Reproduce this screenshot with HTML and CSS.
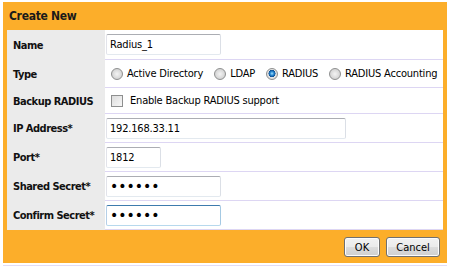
FILE: index.html
```html
<!DOCTYPE html>
<html>
<head>
<meta charset="utf-8">
<link rel="stylesheet" href="styles.css">
</head>
<body>
<div class="dialog">
  <div class="dialog-title">Create New</div>
  <div class="form">
    <div class="row row-name">
      <div class="label">Name</div>
      <div class="value"><input class="field field-md" type="text" value="Radius_1"></div>
    </div>
    <div class="row row-type">
      <div class="label">Type</div>
      <div class="value">
        <label class="opt"><input class="radio" type="radio" name="type">Active Directory</label>
        <label class="opt"><input class="radio" type="radio" name="type">LDAP</label>
        <label class="opt"><input class="radio" type="radio" name="type" checked>RADIUS</label>
        <label class="opt"><input class="radio" type="radio" name="type">RADIUS Accounting</label>
      </div>
    </div>
    <div class="row row-backup">
      <div class="label">Backup RADIUS</div>
      <div class="value">
        <label class="opt"><input class="check" type="checkbox">Enable Backup RADIUS support</label>
      </div>
    </div>
    <div class="row">
      <div class="label">IP Address*</div>
      <div class="value"><input class="field field-lg" type="text" value="192.168.33.11"></div>
    </div>
    <div class="row">
      <div class="label">Port*</div>
      <div class="value"><input class="field field-sm" type="text" value="1812"></div>
    </div>
    <div class="row">
      <div class="label">Shared Secret*</div>
      <div class="value"><input class="field field-md field-secret" type="password" value="secret"></div>
    </div>
    <div class="row">
      <div class="label">Confirm Secret*</div>
      <div class="value"><input class="field field-md field-secret field-focus" type="password" value="secret"></div>
    </div>
  </div>
  <div class="dialog-footer">
    <button class="btn btn-ok" type="button">OK</button>
    <button class="btn btn-cancel" type="button">Cancel</button>
  </div>
</div>
<div class="page-rule"></div>
</body>
</html>
```
FILE: styles.css
```css
html, body {
  margin: 0;
  padding: 0;
  background: #ffffff;
}
body {
  padding: 2px 5px 0 3px;
  font-family: "DejaVu Sans Condensed", "DejaVu Sans", sans-serif;
  font-size: 11px;
  color: #000;
}
.dialog {
  width: 444px;
  background: #fcae2a;
  padding: 0 4px;
  box-sizing: border-box;
}
.dialog-title {
  height: 28px;
  display: flex;
  align-items: center;
  padding-left: 2px;
  font-weight: bold;
  font-size: 12px;
  letter-spacing: -0.3px;
  color: #1a1a1a;
}
.form {
  background: #fff;
}
.row {
  display: grid;
  grid-template-columns: 98px 1fr;
}
.label {
  background: #ebebeb;
  display: flex;
  align-items: center;
  padding-left: 6px;
  font-weight: bold;
  letter-spacing: -0.5px;
  color: #111;
}
.value {
  height: 29px;
  box-sizing: border-box;
  border-bottom: 1px solid #ddd6f3;
  display: flex;
  align-items: center;
  padding-left: 1px;
  overflow: hidden;
}
.row-name .value { height: 30px; }
.row-type .value { height: 28px; }
.row-backup .value { height: 26px; }
.field {
  height: 21px;
  box-sizing: border-box;
  border: 1px solid;
  border-color: #abadb3 #dbdfe6 #e3e9ef #e2e3ea;
  border-radius: 2px;
  padding: 0 3px;
  font-family: inherit;
  font-size: 11px;
  letter-spacing: -0.2px;
  color: #000;
  outline: none;
  margin: 0;
}
.field-md { width: 115px; }
.field-lg { width: 240px; }
.field-sm { width: 55px; }
.field-secret {
  font-size: 14px;
  letter-spacing: 0;
  font-family: "DejaVu Sans", sans-serif;
}
.field-focus { border-color: #3d7bad #a4c9e3 #b7d9ed #b5cfe7; }
.opt {
  display: inline-flex;
  align-items: center;
  margin-right: 6px;
  white-space: nowrap;
  letter-spacing: -0.2px;
}
.radio, .check {
  appearance: none;
  -webkit-appearance: none;
  width: 12px;
  height: 12px;
  margin: 0 4px 0 5px;
  box-sizing: border-box;
  border: 1px solid #8e8f8f;
  background: radial-gradient(circle at 50% 50%, #f4f4f4 0%, #d4d4d4 70%, #cacaca 100%);
}
.radio {
  border-radius: 50%;
}
.radio:checked {
  background: radial-gradient(circle at 50% 45%, #a6e1fa 0%, #2a8ad4 25%, #0d4f92 45%, #e6e6e6 50%, #d0d0d0 100%);
}
.check {
  width: 12px;
  height: 12px;
  margin-right: 7px;
  border-radius: 0;
  background: linear-gradient(135deg, #dcdcdc, #f7f7f7);
}
.dialog-footer {
  height: 33px;
  display: flex;
  justify-content: flex-end;
  align-items: flex-start;
  padding: 7px 3px 0 0;
  box-sizing: border-box;
  gap: 6px;
}
.btn {
  height: 20px;
  box-sizing: border-box;
  border: 1px solid #707070;
  border-radius: 3px;
  background: linear-gradient(#f2f2f2 0%, #ebebeb 50%, #dddddd 51%, #cfcfcf 100%);
  box-shadow: inset 0 0 0 1px #fcfcfc;
  font-family: inherit;
  font-size: 11px;
  color: #000;
  padding: 0;
}
.btn-ok { width: 36px; }
.btn-cancel { width: 54px; }
.page-rule {
  height: 1px;
  margin-top: 2px;
  background: #e2dcf5;
}
```
